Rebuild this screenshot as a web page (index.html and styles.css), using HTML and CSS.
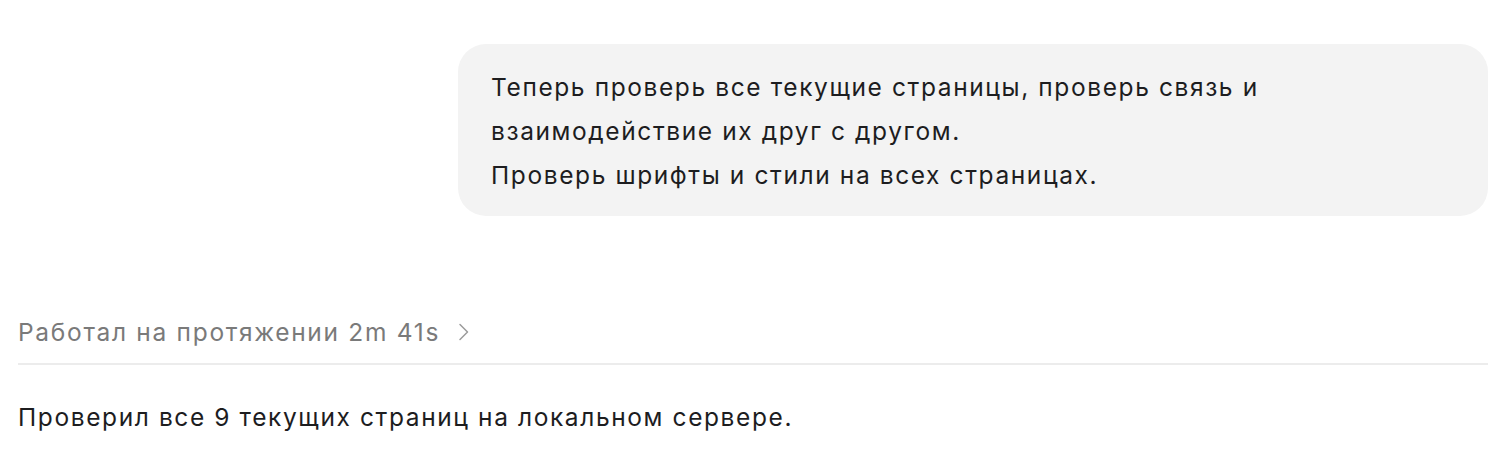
FILE: index.html
```html
<!DOCTYPE html>
<html lang="ru">
<head>
<meta charset="utf-8">
<link rel="stylesheet" href="styles.css">
</head>
<body>
<main class="thread">
  <div class="user-row">
    <div class="bubble">Теперь проверь все текущие страницы, проверь связь и<br>взаимодействие их друг с другом.<br>Проверь шрифты и стили на всех страницах.</div>
  </div>
  <div class="worked">
    <span class="worked-label">Работал на протяжении 2m 41s</span>
    <svg class="chev" width="12" height="20" viewBox="0 0 12 20"><path d="M2 2.5 L9.5 10 L2 17.5" fill="none" stroke="#9b9b9b" stroke-width="1.5" stroke-linecap="round" stroke-linejoin="round"/></svg>
  </div>
  <p class="answer">Проверил все 9 текущих страниц на локальном сервере.</p>
</main>
</body>
</html>
```
FILE: styles.css
```css
html, body {
  margin: 0;
  padding: 0;
  background: #ffffff;
}
body {
  font-family: Inter, "Noto Sans", sans-serif;
  color: #1d1d1f;
  font-size: 24.5px;
  font-weight: 400;
  letter-spacing: 1.6px;
}
.thread {
  padding: 44px 24px 0 18px;
}
.user-row {
  display: flex;
  justify-content: flex-end;
}
.bubble {
  width: 1030px;
  box-sizing: border-box;
  background: #f3f3f3;
  border-radius: 28px;
  padding: 21px 33px 19px;
  line-height: 44px;
}
.worked {
  margin-top: 96px;
  display: flex;
  align-items: center;
  gap: 18px;
  height: 40px;
  border-bottom: 2px solid #ececec;
  padding-bottom: 11px;
}
.worked-label {
  color: #7a7a7a;
  letter-spacing: 1.7px;
}
.chev {
  display: block;
}
.answer {
  margin: 36px 0 0;
  line-height: 32px;
}
```
